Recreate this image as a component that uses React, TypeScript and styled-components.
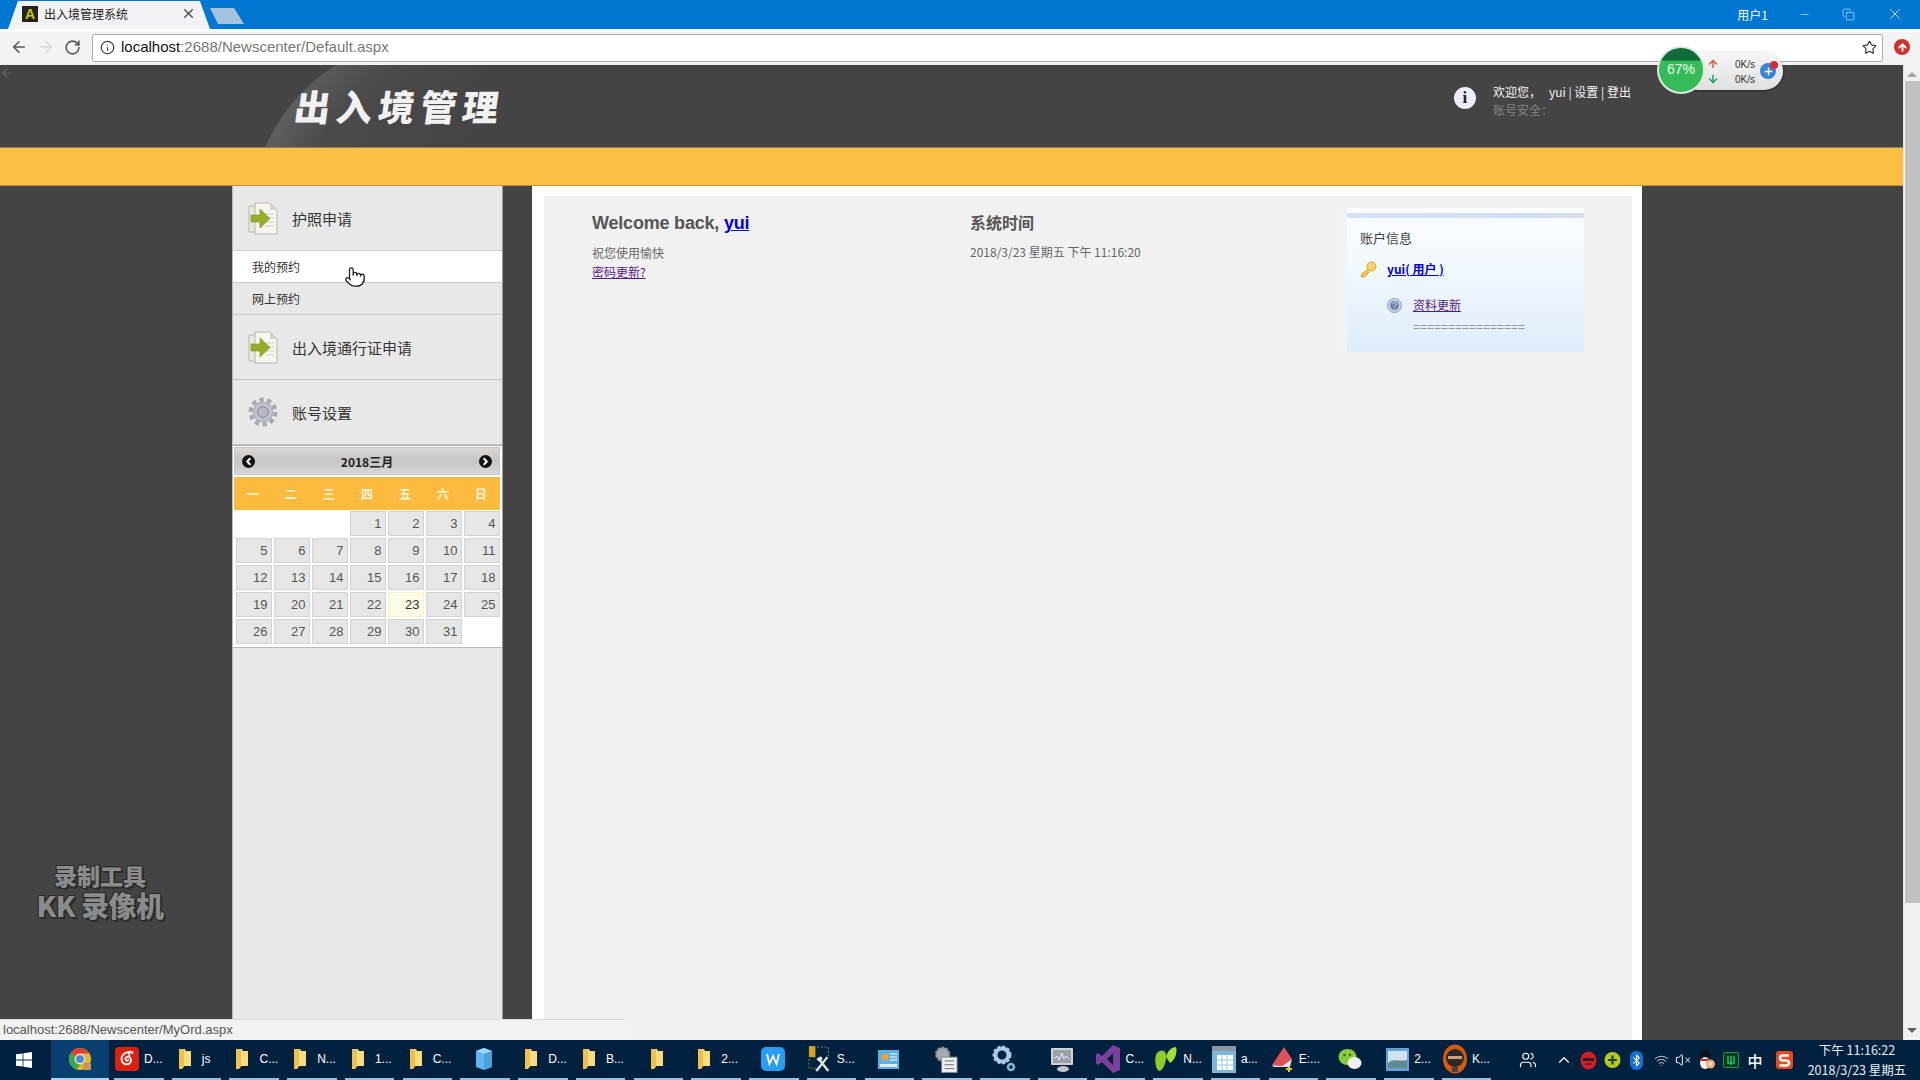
import React from "react";
import styled, { createGlobalStyle } from "styled-components";
import { ArrowLeft, ArrowRight, RotateCw, Star, Info, Minus, X, Copy, Wifi, Bluetooth, VolumeX, ChevronUp, Users, Pointer, ArrowUp, Plus, ChevronLeft, ChevronRight } from "lucide-react";

const SANS = `"Liberation Sans", "Noto Sans CJK SC", sans-serif`;
const CJK = `"Noto Sans CJK SC", "Liberation Sans", sans-serif`;

const Global = createGlobalStyle`
  html, body { margin: 0; padding: 0; width: 1920px; height: 1080px; overflow: hidden; background: #444; }
  * { box-sizing: border-box; }
`;

const Screen = styled.div`
  position: relative; width: 1920px; height: 1080px; overflow: hidden;
  display: grid; grid-template-rows: 29px 36px 975px 40px; font-family: ${SANS};
`;

/* ---------- Browser chrome ---------- */
const TitleBar = styled.div`
  background: #0277d1; display: flex; align-items: flex-end; padding-left: 8px; color: #fff;
`;
const Tab = styled.div`
  width: 202px; height: 28px; background: #f2f2f4; display: flex; align-items: center; padding: 0 14px 3px 14px;
  clip-path: polygon(0 100%, 10px 0, 192px 0, 100% 100%);
  font: 12px ${CJK}; color: #222; gap: 6px;
`;
const Favicon = styled.span`
  width: 16px; height: 16px; background: #222; color: #c8c800; font: bold 14px/16px ${SANS}; text-align: center; flex: none;
`;
const TabTitle = styled.span` flex: 1; `;
const TabClose = styled(X)` color: #555; flex: none; `;
const NewTab = styled.div`
  width: 34px; height: 16px; margin: 0 0 5px 0; background: #a5c2df;
  clip-path: polygon(0 0, 24px 0, 100% 100%, 8px 100%);
`;
const WinUser = styled.span` margin-left: auto; margin-right: 30px; margin-bottom: 6px; font: 12px ${CJK}; `;
const WinControls = styled.div` display: flex; gap: 31px; padding-right: 16px; margin-bottom: 6px; align-items: center; `;
const Toolbar = styled.div`
  background: #f3f3f3; display: flex; align-items: center; padding: 0 8px 3px 10px; border-top: 3px solid #fbfbfb;
`;
const NavIcons = styled.div` display: flex; align-items: center; gap: 9px; width: 82px; color: #555; `;
const UrlBox = styled.div`
  flex: 1; height: 28px; margin-top: 1px; background: #fff; border: 1px solid #aeaeae; border-radius: 2px; display: flex; align-items: center;
  padding: 0 5px 0 7px; font: 15px ${SANS}; color: #777; gap: 6px;
`;
const UrlHost = styled.span` color: #111; `;
const UrlText = styled.span` flex: 1; margin-top: -2px; `;
const ExtBtn = styled.span`
  width: 16px; height: 16px; border-radius: 50%; background: #d0312d; color: #fff; display: flex; align-items: center; justify-content: center; margin-left: 11px; margin-right: 2px;
`;

/* ---------- Page ---------- */
const Page = styled.div` display: flex; min-height: 0; `;
const Main = styled.div` width: 1903px; display: flex; flex-direction: column; background: #444; `;
const Header = styled.header`
  height: 82px; display: flex; justify-content: space-between; flex: none;
  background:
    linear-gradient(to right, rgba(68, 68, 68, 0) 290px, #444 490px),
    radial-gradient(circle 193px at 440px 161px, #484848 0%, #4c4c4c 75%, #5e5e5e 99%, #444 100%);
`;
const Logo = styled.div`
  margin: 14px 0 0 295px; height: 52px; font: 900 36px/52px ${CJK}; letter-spacing: 6px; color: #f1f1f1; transform: skewX(-8deg);
`;
const UserBlock = styled.div` display: flex; gap: 17px; padding: 18px 272px 0 0; `;
const InfoDot = styled.span`
  width: 22px; height: 22px; margin-top: 4px; border-radius: 50%; background: #eeeefa; color: #222; font: bold 17px/22px "Liberation Serif", serif; text-align: center;
`;
const UserLines = styled.div` font: 12px/18px ${CJK}; color: #f4f4f4; `;
const WelcomeGap = styled.span` display: inline-block; width: 8px; `;
const Muted = styled.div` color: #858585; `;
const OrangeBar = styled.div`
  height: 39px; flex: none; background: #fbc043; border-top: 1px solid #8d8262; border-bottom: 1px solid #c2933a;
`;
const Body = styled.div` flex: 1; display: flex; min-height: 0; `;
const LeftGutter = styled.div` width: 232px; flex: none; `;
const Sidebar = styled.aside`
  width: 271px; flex: none; background: #e9e8e8; border-left: 1px solid #bbb; border-right: 1px solid #9a9a9a; display: flex; flex-direction: column;
`;
const MenuItem = styled.div<{ $dotted?: boolean }>`
  height: 65px; flex: none; display: flex; align-items: center; gap: 14px; padding-left: 15px;
  font: 15px ${CJK}; color: #333; border-bottom: 1px ${(p) => (p.$dotted ? "dotted #bbb" : "solid #c4c4c4")};
`;
const SubItem = styled.div<{ $active?: boolean }>`
  height: 32px; flex: none; display: flex; align-items: center; padding-left: 19px; font: 12px ${CJK}; color: #333;
  background: ${(p) => (p.$active ? "#fff" : "#e9e8e8")}; border-bottom: 1px solid #c8c8c8;
`;
const CalendarWrap = styled.div`
  height: 203px; flex: none; background: #fff; padding: 1px 2px 0 1px; border-top: 1px solid #aaa; border-bottom: 1px solid #bbb;
`;
const CalHead = styled.div`
  height: 28px; display: flex; align-items: center; justify-content: space-between; padding: 0 7px; border: 1px solid #c6c6c6;
  background: linear-gradient(#d9d8d6, #c6c5c2 50%, #d8d8d8); font: bold 12px ${CJK}; color: #222;
`;
const CalArrow = styled.span`
  width: 13px; height: 13px; border-radius: 50%; background: #111; color: #fff; display: flex; align-items: center; justify-content: center;
`;
const WeekRow = styled.div`
  height: 33px; margin-top: 2px; display: grid; grid-template-columns: repeat(7, 38px); align-items: center; background: #fcbb3e;
  font: bold 12px ${CJK}; color: #fff5dc; text-align: center; padding-right: 3px;
`;
const DayGrid = styled.div`
  margin-top: 1px; padding-left: 2px; display: grid; grid-template-columns: repeat(7, 35.5px); grid-auto-rows: 24.5px; gap: 2.5px;
`;
const Day = styled.div<{ $today?: boolean }>`
  background: ${(p) => (p.$today ? "#fbfbe6" : "#e6e6e6")}; border: 1px solid ${(p) => (p.$today ? "#f6f3c8" : "#d2d2d2")};
  font: 13px/24px ${SANS}; color: ${(p) => (p.$today ? "#333" : "#555")}; text-align: right; padding-right: 3px;
`;
const BlankDay = styled.div``;
const Gutter = styled.div` width: 29px; flex: none; `;
const ContentWrap = styled.main`
  width: 1110px; flex: none; background: #fff; padding: 10px 10px 0 12px; display: flex;
`;
const Content = styled.div`
  flex: 1; background: #f1f1f1; display: grid; grid-template-columns: 378px 374px 240px; padding: 12px 0 0 48px; align-items: start;
`;
const Heading = styled.h2`
  margin: 0 0 5px; font: bold 18px/30px ${SANS}; color: #555; letter-spacing: -0.2px;
`;
const HeadingCjk = styled(Heading)` font: 700 16px/28px ${CJK}; letter-spacing: 0; margin-bottom: 6px; `;
const BigLink = styled.a` color: #0000e0; text-decoration: underline; `;
const Small = styled.div` font: 12px/19px ${CJK}; color: #666; `;
const SmallLink = styled.a` display: block; font: 12px/19px ${CJK}; color: #551a8b; text-decoration: underline; `;
const Account = styled.section`
  height: 144px; margin-left: -1px;
  background: linear-gradient(#fbfdff, #f3f9fe 35%, #deecfb);
  border-left: 4px solid #edf3fa; font: 13px ${CJK}; color: #444;
`;
const AccountStripe = styled.div` height: 5px; margin-top: 5px; background: linear-gradient(90deg, #d4e3f6, #cfdff3 80%, #d6dfe8); `;
const AccountBody = styled.div` padding: 10px 0 0 17px; `;
const AccountTitle = styled.div` font: 13px/20px ${CJK}; color: #444; margin-left: -4px; `;
const AccountRow = styled.div<{ $indent?: number; $top: number }>`
  display: flex; align-items: center; gap: 10px; margin-left: ${(p) => p.$indent ?? -4}px; margin-top: ${(p) => p.$top}px;
`;
const BlueLink = styled.a` font: bold 12px/18px ${CJK}; color: #0000e0; text-decoration: underline; `;
const PurpleLink = styled.a` font: 12px/18px ${CJK}; color: #551a8b; text-decoration: underline; margin-left: 1px; `;
const Rule = styled.div` margin: 7px 0 0 49px; font: 12px/12px ${SANS}; color: #999; width: 112px; overflow: hidden; white-space: nowrap; `;
const RightGutter = styled.div` flex: 1; `;
const ScrollTrack = styled.div`
  width: 17px; background: #f1f1f1; display: flex; flex-direction: column; align-items: center; color: #666; border-left: 1px solid #e4e4e4;
`;
const ScrollArrow = styled.span<{ $down?: boolean }>`
  width: 0; height: 0; flex: none; margin: 7px 0; border-left: 5px solid transparent; border-right: 5px solid transparent;
  ${(p) => (p.$down ? "border-top: 5px solid #606060;" : "border-bottom: 5px solid #a3a3a3;")}
`;
const ScrollThumb = styled.div` width: 15px; height: 822px; background: #c1c1c1; flex: none; margin-top: -3px; `;
const ScrollFill = styled.div` flex: 1; `;

/* ---------- Taskbar ---------- */
const Taskbar = styled.footer`
  background: #01213f; display: flex; align-items: stretch; color: #fff; font: 12px ${SANS};
`;
const StartBtn = styled.div` width: 51px; flex: none; display: flex; align-items: center; justify-content: center; padding-right: 3px; `;
const AppList = styled.div` display: flex; gap: 8.24px; `;
const FirstApp = styled.div`
  width: 58px; margin-right: -3.24px; background: #063f70; border-bottom: 2px solid #a8d4f0; display: flex; align-items: center; justify-content: center;
`;
const AppBtn = styled.div<{ $alone?: boolean }>`
  width: 49.5px; flex: none; display: flex; align-items: center; gap: 5px; border-bottom: 2px solid #96c0de;
  padding-left: ${(p) => (p.$alone ? 0 : 1)}px; padding-right: ${(p) => (p.$alone ? 2 : 0)}px; justify-content: ${(p) => (p.$alone ? "center" : "flex-start")}; white-space: nowrap;
`;
const AppIconBox = styled.span` width: 24px; height: 24px; flex: none; display: flex; align-items: center; justify-content: center; `;
const Tray = styled.div` margin-left: auto; display: flex; align-items: center; `;
const TrayCell = styled.span<{ $after?: number; $before?: number }>`
  width: 24px; height: 24px; display: flex; align-items: center; justify-content: center; margin-right: ${(p) => p.$after ?? 0}px; margin-left: ${(p) => p.$before ?? 0}px;
  font: 500 15px ${CJK}; color: #fff;
`;
const Clock = styled.div` width: 124px; font: 12.5px/20px ${CJK}; text-align: center; padding-right: 2px; color: #e8eef4; `;

/* ---------- Overlays ---------- */
const StatusBar = styled.div`
  position: absolute; left: 0; top: 1019px; width: 625px; height: 21px; background: #f2f2f2; border-top: 1px solid #dcdcdc;
  font: 13px/20px ${SANS}; color: #555; padding-left: 3px;
`;
const Watermark = styled.div`
  position: absolute; left: 28px; top: 861px; width: 144px; text-align: center; color: #8b8b8b; font-family: ${CJK}; font-weight: 900;
  text-shadow: 2px 2px 0 #2a2a2a, -1px -1px 0 #2a2a2a, 1px -1px 0 #2a2a2a, -1px 1px 0 #2a2a2a;
`;
const WmTop = styled.div` font-size: 23px; line-height: 28px; `;
const WmBottom = styled.div` font-size: 28px; line-height: 33px; white-space: nowrap; letter-spacing: -0.5px; `;
const Cursor = styled.div` position: absolute; left: 344px; top: 266px; color: #222; `;
const NetWidget = styled.div`
  position: absolute; left: 1657px; top: 46px; width: 126px; height: 48px; display: flex; align-items: center;
`;
const NetPill = styled.div`
  position: absolute; left: 22px; right: 0; top: 6px; height: 38px; border-radius: 19px; background: linear-gradient(#f6f6f6, #e0e0e0); box-shadow: 0 1px 3px rgba(0,0,0,.4);
`;
const NetBall = styled.div`
  position: relative; width: 48px; height: 48px; border-radius: 50%; border: 2px solid #dfe8e0; color: #e8ffe8; font: 14px/42px ${SANS}; text-align: center;
  background: linear-gradient(#0f6d3a 0 28%, #35bb58 29%);
`;
const NetArrows = styled.div` position: relative; width: 14px; margin-left: 1px; margin-top: 2px; display: flex; flex-direction: column; gap: 3px; align-items: center; `;
const NetUp = styled(ArrowUp)` color: #e0553a; `;
const NetDown = styled(ArrowUp)` color: #2a9a55; transform: rotate(180deg); `;
const NetRates = styled.div` position: relative; margin-left: 15px; margin-top: 4px; font: 10px/15px ${SANS}; color: #333; `;
const NetPlus = styled.div`
  position: absolute; left: 103px; top: 17px; width: 16px; height: 16px; border-radius: 50%; background: #3a84d8; color: #fff; display: flex; align-items: center; justify-content: center;
`;
const NetBadge = styled.span` position: absolute; left: 113px; top: 15px; width: 8px; height: 8px; border-radius: 50%; background: #d82a35; `;
const CornerMark = styled(ArrowLeft)` position: absolute; left: 0; top: 66px; color: #666; `;

/* ---------- Drawings ---------- */
const DocArrow = () => (
  <svg width="30" height="33" viewBox="0 0 30 33">
    <path d="M1 4h16l5 5v21H1z" fill="#e8e8e0" stroke="#b8b8b0" />
    <path d="M7 1h15l7 7v24H7z" fill="#f6f6ee" stroke="#b4b4ac" />
    <path d="M22 1v7h7z" fill="#d4d4cc" />
    <path d="M17 12h9M17 16h9M17 20h9M17 24h9" stroke="#ccc" />
    <path d="M3 13h9V7l10 9.5L12 26v-6H3z" fill="#96ad28" stroke="#78901c" strokeWidth=".6" />
  </svg>
);
const GearIcon = () => (
  <svg width="30" height="30" viewBox="0 0 30 30">
    <defs>
      <radialGradient id="g1"><stop offset="0" stopColor="#f0f0f4" /><stop offset="1" stopColor="#b0b0bc" /></radialGradient>
    </defs>
    <circle cx="15" cy="15" r="12" fill="none" stroke="#a8a8b0" strokeWidth="5" strokeDasharray="4.2 3.33" />
    <circle cx="15" cy="15" r="10.5" fill="url(#g1)" />
    <circle cx="15" cy="15" r="5.5" fill="#b8b8c8" stroke="#83838f" />
  </svg>
);
const KeyIcon = () => (
  <svg width="17" height="17" viewBox="0 0 17 17">
    <circle cx="11.5" cy="5.5" r="4.5" fill="#f5d36b" stroke="#d6a632" />
    <path d="M8 8 1.5 13.5v2.5h3l1-1.5 1.5-.5.5-2 2-1" fill="#f5c84a" stroke="#d6a632" />
  </svg>
);
const HelpIcon = () => (
  <svg width="15" height="15" viewBox="0 0 15 15">
    <circle cx="7.5" cy="7.5" r="7" fill="#c8d4e4" stroke="#8a9cb4" />
    <circle cx="7.5" cy="7.5" r="4.5" fill="#6888ac" />
    <path d="M5.8 6.2a1.7 1.7 0 1 1 2.6 1.4c-.6.4-.9.7-.9 1.300M7.500 10.200v.8" fill="none" stroke="#e0e8f0" strokeWidth="1" />
  </svg>
);
const WinLogo = () => (
  <svg width="16" height="16" viewBox="0 0 16 16" fill="#fff">
    <path d="M0 2.3 6.6 1.4v6.2H0zM7.4 1.3 16 0v7.6H7.4zM0 8.4h6.6v6.2L0 13.7zM7.4 8.4H16V16l-8.6-1.2z" />
  </svg>
);
const ChromeIcon = () => (
  <svg width="24" height="24" viewBox="0 0 24 24">
    <circle cx="12" cy="12" r="11" fill="#e8b52e" />
    <path d="M12 1a11 11 0 0 1 9.5 5.5H12a5.5 5.5 0 0 0-5 3L3.2 5.4A11 11 0 0 1 12 1z" fill="#d9432f" />
    <path d="M3.2 5.4 7 9.5a5.5 5.5 0 0 0 5 8L9 22.6A11 11 0 0 1 3.2 5.4z" fill="#36a852" />
    <circle cx="12" cy="12" r="5" fill="#fff" /><circle cx="12" cy="12" r="4" fill="#4a88d8" />
    <rect x="15" y="16" width="8" height="7" rx="1.5" fill="#c89a50" />
  </svg>
);
const NeteaseIcon = () => (
  <svg width="24" height="24" viewBox="0 0 24 24">
    <rect width="24" height="24" rx="4" fill="#e0200f" />
    <path d="M14 5c-5 .5-8 4-7.5 8 .5 3.5 5 5.500 8 3.500 2.500-1.700 2-5.500-.5-6.500-2-.8-4 .7-3.500 2.500.4 1.300 2 1.500 3 .5M14 5l.5 4M14 5c1.500-.5 3 0 3.500 1" fill="none" stroke="#fff" strokeWidth="1.800" strokeLinecap="round" />
  </svg>
);
const FolderIcon = () => (
  <svg width="14" height="24" viewBox="0 0 14 24">
    <path d="M1 2h6l1 2h5v15H6l-2 3H1z" fill="#f9dc82" />
    <path d="M1 2h5v18l-5 2z" fill="#eec04f" />
  </svg>
);
const CubeIcon = () => (
  <svg width="18" height="24" viewBox="0 0 18 24">
    <path d="M1 4 9 1l8 3v16l-8 3-8-3z" fill="#62b5ec" /><path d="M1 4l8 3 8-3-8-3z" fill="#9ad4f6" /><path d="M9 7v16l8-3V4z" fill="#4ba0dc" />
  </svg>
);
const WpsIcon = () => (
  <svg width="24" height="24" viewBox="0 0 24 24">
    <rect width="24" height="24" rx="5" fill="#2a9cf2" />
    <path d="M6 7l2.500 10L12 9l3.500 8L18 7" fill="none" stroke="#fff" strokeWidth="1.800" />
  </svg>
);
const ToolsIcon = () => (
  <svg width="26" height="30" viewBox="0 0 26 30">
    <rect x="1" y="1" width="7" height="12" fill="#d8a020" />
    <path d="M10 2h12v12" fill="none" stroke="#89a" strokeDasharray="2 2" /><path d="M1 15v10h8" fill="none" stroke="#5b2" strokeDasharray="2 2" />
    <path d="M9 28 21 13M22 28 11 14" stroke="#dfe6ee" strokeWidth="2.500" /><path d="M9 15l5-3 2 3-4 3z" fill="#eee" />
  </svg>
);
const ChartIcon = () => (
  <svg width="21" height="19" viewBox="0 0 21 19">
    <rect width="21" height="19" fill="#5cb2e6" />
    <circle cx="7" cy="7" r="3.500" fill="#f3a23c" /><path d="M12 4h7M12 7h7M12 10h7" stroke="#fff" /><path d="M2 14h17v3H2z" fill="#dcecf8" />
  </svg>
);
const SettingsDocIcon = () => (
  <svg width="25" height="29" viewBox="0 0 25 29">
    <circle cx="9" cy="9" r="7" fill="#a8aab0" stroke="#888" strokeDasharray="3 1.500" strokeWidth="2" />
    <rect x="8" y="12" width="16" height="16" fill="#eef0f2" stroke="#888" />
    <path d="M11 16h10M11 20h10M11 24h10" stroke="#666" />
  </svg>
);
const GearsIcon = () => (
  <svg width="24" height="28" viewBox="0 0 24 28">
    <circle cx="10" cy="10" r="6.500" fill="none" stroke="#a8cce8" strokeWidth="4" />
    <circle cx="10" cy="10" r="8.500" fill="none" stroke="#a8cce8" strokeWidth="2" strokeDasharray="3 2" />
    <circle cx="19" cy="22" r="3" fill="none" stroke="#86b4d8" strokeWidth="2.500" />
  </svg>
);
const MonitorIcon = () => (
  <svg width="24" height="28" viewBox="0 0 24 28">
    <rect x="1" y="3" width="22" height="17" rx="1" fill="#d0d2d6" /><rect x="3" y="5" width="18" height="13" fill="#9aa0a8" />
    <path d="M4 14l3-3 2 4 3-7 2 6 2-3 3 3" fill="none" stroke="#eef" /><ellipse cx="13" cy="24" rx="6" ry="3" fill="#c4c4c8" />
  </svg>
);
const VsIcon = () => (
  <svg width="24" height="30" viewBox="0 0 24 30">
    <path d="M17 1 24 4v22l-7 3L6 18l-4 3-2-1.500V10.500L2 9l4 3zM17 9l-6 6 6 6z" fill="#7b3f9c" />
  </svg>
);
const GreenLeafIcon = () => (
  <svg width="24" height="28" viewBox="0 0 24 28">
    <path d="M3 8c6-5 10-2 9 6-1 7-4 12-7 12C1 24 0 12 3 8z" fill="#8ccc2c" /><path d="M12 12c1-6 6-10 10-10 2 6-2 14-6 16z" fill="#a8dc38" />
  </svg>
);
const TableIcon = () => (
  <svg width="24" height="27" viewBox="0 0 24 27">
    <rect width="24" height="27" fill="#7db7d8" /><rect y="0" width="24" height="5" fill="#8a98a4" />
    <rect x="5" y="9" width="16" height="15" fill="#fff" /><path d="M5 14h16M5 19h16M10 9v15M15 9v15" stroke="#9cc" />
  </svg>
);
const EraserIcon = () => (
  <svg width="24" height="28" viewBox="0 0 24 28">
    <path d="M2 20 14 2l8 12-10 7z" fill="#e0505a" /><path d="M2 20l10 1 10-7-2 8H4z" fill="#eedede" />
    <path d="M16 24h6M19 21v6" stroke="#e4c83a" strokeWidth="2" />
  </svg>
);
const WechatIcon = () => (
  <svg width="24" height="24" viewBox="0 0 24 24">
    <ellipse cx="9.500" cy="10" rx="9" ry="8" fill="#8acb3a" /><ellipse cx="16.500" cy="16" rx="7" ry="6" fill="#f0f0f0" />
    <circle cx="6.500" cy="8" r="1.200" fill="#3a6a20" /><circle cx="12" cy="8" r="1.200" fill="#3a6a20" />
  </svg>
);
const PhotoIcon = () => (
  <svg width="23" height="23" viewBox="0 0 23 23">
    <rect width="23" height="23" fill="#6aa0d8" /><rect x="2" y="3" width="19" height="17" fill="#cfe4ee" />
    <path d="M2 15c5-5 10-1 19-3v8H2z" fill="#5f8a90" />
  </svg>
);
const KkIcon = () => (
  <svg width="24" height="30" viewBox="0 0 24 30">
    <ellipse cx="12" cy="15" rx="12" ry="14.500" fill="#d8580e" /><ellipse cx="12" cy="14" rx="9" ry="9" fill="#2a2a2a" />
    <path d="M5 12h14v3H5z" fill="#c8a080" /><rect x="9" y="23" width="6" height="5" fill="#444" />
  </svg>
);
const SecIcon = () => (
  <svg width="17" height="19" viewBox="0 0 17 19">
    <ellipse cx="8.500" cy="9.500" rx="8" ry="9" fill="#d81e24" /><path d="M3 7h11v3H3z" fill="#222" /><path d="M5 13h7" stroke="#222" />
  </svg>
);
const Plus360Icon = () => (
  <svg width="17" height="18" viewBox="0 0 17 18">
    <circle cx="8.500" cy="9" r="8" fill="#b8c81c" /><path d="M8.500 4.500v9M4 9h9" stroke="#1c4a1c" strokeWidth="2.200" />
  </svg>
);
const BtBadge = styled.span`
  width: 13px; height: 19px; border-radius: 6px; background: #1270d8; color: #fff; display: flex; align-items: center; justify-content: center;
`;
const QqIcon = () => (
  <svg width="16" height="20" viewBox="0 0 16 20">
    <ellipse cx="6" cy="5" rx="4.500" ry="4.500" fill="#111" /><ellipse cx="6" cy="13" rx="5" ry="6" fill="#f4f4f4" />
    <path d="M2 9h8v2H2z" fill="#d82020" /><circle cx="11.500" cy="14" r="4.500" fill="#e8a878" /><path d="M9.500 13h4M9.500 15h4" stroke="#fff" />
  </svg>
);
const GreenBox = () => (
  <svg width="16" height="16" viewBox="0 0 16 16">
    <rect x=".5" y=".5" width="15" height="15" rx="1" fill="#0a3a22" stroke="#0aa040" />
    <path d="M5 4v7h6V4M8 4v9" fill="none" stroke="#20c060" strokeWidth="1.500" />
  </svg>
);
const SogouIcon = () => (
  <svg width="17" height="18" viewBox="0 0 17 18">
    <rect width="17" height="18" rx="3" fill="#e8481c" />
    <path d="M13 4.500H6.500Q4 4.500 4 7t3 2.500h3Q13 9.500 13 12t-3 2.500H3.500" fill="none" stroke="#fff" strokeWidth="2.500" />
  </svg>
);

type AppDef = { icon: React.ReactNode; label?: string };
const apps: AppDef[] = [
  { icon: <NeteaseIcon />, label: "D..." },
  { icon: <FolderIcon />, label: "js" },
  { icon: <FolderIcon />, label: "C..." },
  { icon: <FolderIcon />, label: "N..." },
  { icon: <FolderIcon />, label: "1..." },
  { icon: <FolderIcon />, label: "C..." },
  { icon: <CubeIcon /> },
  { icon: <FolderIcon />, label: "D..." },
  { icon: <FolderIcon />, label: "B..." },
  { icon: <FolderIcon /> },
  { icon: <FolderIcon />, label: "2..." },
  { icon: <WpsIcon /> },
  { icon: <ToolsIcon />, label: "S..." },
  { icon: <ChartIcon /> },
  { icon: <SettingsDocIcon /> },
  { icon: <GearsIcon /> },
  { icon: <MonitorIcon /> },
  { icon: <VsIcon />, label: "C..." },
  { icon: <GreenLeafIcon />, label: "N..." },
  { icon: <TableIcon />, label: "a..." },
  { icon: <EraserIcon />, label: "E:..." },
  { icon: <WechatIcon /> },
  { icon: <PhotoIcon />, label: "2..." },
  { icon: <KkIcon />, label: "K..." },
];

const weekdays = ["一", "二", "三", "四", "五", "六", "日"];
const days: (number | null)[] = [null, null, null, ...Array.from({ length: 31 }, (_, i) => i + 1), null];

export default function App() {
  return (
    <Screen>
      <Global />
      <TitleBar>
        <Tab>
          <Favicon>A</Favicon>
          <TabTitle>出入境管理系统</TabTitle>
          <TabClose size={15} strokeWidth={2.5} />
        </Tab>
        <NewTab />
        <WinUser>用户1</WinUser>
        <WinControls>
          <Minus size={13} strokeWidth={1} />
          <Copy size={13} strokeWidth={1} />
          <X size={18} strokeWidth={1} />
        </WinControls>
      </TitleBar>
      <Toolbar>
        <NavIcons>
          <ArrowLeft size={18} strokeWidth={2} />
          <ArrowRight size={18} strokeWidth={2} color="#d8d8d8" />
          <RotateCw size={17} strokeWidth={2.2} />
        </NavIcons>
        <UrlBox>
          <Info size={15} color="#444" strokeWidth={2} />
          <UrlText><UrlHost>localhost</UrlHost>:2688/Newscenter/Default.aspx</UrlText>
          <Star size={15} color="#333" strokeWidth={1.8} />
        </UrlBox>
        <ExtBtn><ArrowUp size={11} strokeWidth={4} /></ExtBtn>
      </Toolbar>
      <Page>
        <Main>
          <Header>
            <Logo>出入境管理</Logo>
            <UserBlock>
              <InfoDot>i</InfoDot>
              <UserLines>
                <div>欢迎您，<WelcomeGap />yui | 设置 | 登出</div>
                <Muted>账号安全：</Muted>
              </UserLines>
            </UserBlock>
          </Header>
          <OrangeBar />
          <Body>
            <LeftGutter />
            <Sidebar>
              <MenuItem $dotted><DocArrow />护照申请</MenuItem>
              <SubItem $active>我的预约</SubItem>
              <SubItem>网上预约</SubItem>
              <MenuItem><DocArrow />出入境通行证申请</MenuItem>
              <MenuItem><GearIcon />账号设置</MenuItem>
              <CalendarWrap>
                <CalHead>
                  <CalArrow><ChevronLeft size={11} strokeWidth={4} /></CalArrow>
                  2018三月
                  <CalArrow><ChevronRight size={11} strokeWidth={4} /></CalArrow>
                </CalHead>
                <WeekRow>{weekdays.map((d) => <span key={d}>{d}</span>)}</WeekRow>
                <DayGrid>
                  {days.map((d, i) => d === null ? <BlankDay key={i} /> : <Day key={i} $today={d === 23}>{d}</Day>)}
                </DayGrid>
              </CalendarWrap>
            </Sidebar>
            <Gutter />
            <ContentWrap>
              <Content>
                <div>
                  <Heading>Welcome back, <BigLink>yui</BigLink></Heading>
                  <Small>祝您使用愉快</Small>
                  <SmallLink>密码更新?</SmallLink>
                </div>
                <div>
                  <HeadingCjk>系统时间</HeadingCjk>
                  <Small>2018/3/23 星期五 下午 11:16:20</Small>
                </div>
                <Account>
                  <AccountStripe />
                  <AccountBody>
                    <AccountTitle>账户信息</AccountTitle>
                    <AccountRow $top={12}><KeyIcon /><BlueLink>yui( 用户 )</BlueLink></AccountRow>
                    <AccountRow $indent={23} $top={18}><HelpIcon /><PurpleLink>资料更新</PurpleLink></AccountRow>
                    <Rule>================</Rule>
                  </AccountBody>
                </Account>
              </Content>
            </ContentWrap>
            <RightGutter />
          </Body>
        </Main>
        <ScrollTrack>
          <ScrollArrow />
          <ScrollThumb />
          <ScrollFill />
          <ScrollArrow $down />
        </ScrollTrack>
      </Page>
      <Taskbar>
        <StartBtn><WinLogo /></StartBtn>
        <AppList>
          <FirstApp><ChromeIcon /></FirstApp>
          {apps.map((a, i) => (
            <AppBtn key={i} $alone={!a.label}>
              <AppIconBox>{a.icon}</AppIconBox>
              {a.label}
            </AppBtn>
          ))}
        </AppList>
        <Tray>
          <TrayCell $after={12}><Users size={18} strokeWidth={1.5} /></TrayCell>
          <TrayCell><ChevronUp size={18} strokeWidth={1.5} /></TrayCell>
          <TrayCell><SecIcon /></TrayCell>
          <TrayCell><Plus360Icon /></TrayCell>
          <TrayCell><BtBadge><Bluetooth size={13} strokeWidth={2} /></BtBadge></TrayCell>
          <TrayCell $before={1}><Wifi size={15} strokeWidth={1.5} color="#c8d4de" /></TrayCell>
          <TrayCell $before={-2}><VolumeX size={16} strokeWidth={1.5} /></TrayCell>
          <TrayCell><QqIcon /></TrayCell>
          <TrayCell><GreenBox /></TrayCell>
          <TrayCell>中</TrayCell>
          <TrayCell $before={5}><SogouIcon /></TrayCell>
          <Clock>
            <div>下午 11:16:22</div>
            <div>2018/3/23 星期五</div>
          </Clock>
        </Tray>
      </Taskbar>

      <CornerMark size={14} />
      <Watermark>
        <WmTop>录制工具</WmTop>
        <WmBottom>KK 录像机</WmBottom>
      </Watermark>
      <Cursor><Pointer size={22} fill="#fff" strokeWidth={1.4} /></Cursor>
      <StatusBar>localhost:2688/Newscenter/MyOrd.aspx</StatusBar>
      <NetWidget>
        <NetPill />
        <NetBall>67%</NetBall>
        <NetArrows><NetUp size={12} strokeWidth={3} /><NetDown size={12} strokeWidth={3} /></NetArrows>
        <NetRates><div>0K/s</div><div>0K/s</div></NetRates>
        <NetPlus><Plus size={11} strokeWidth={3} /></NetPlus>
        <NetBadge />
      </NetWidget>
    </Screen>
  );
}
